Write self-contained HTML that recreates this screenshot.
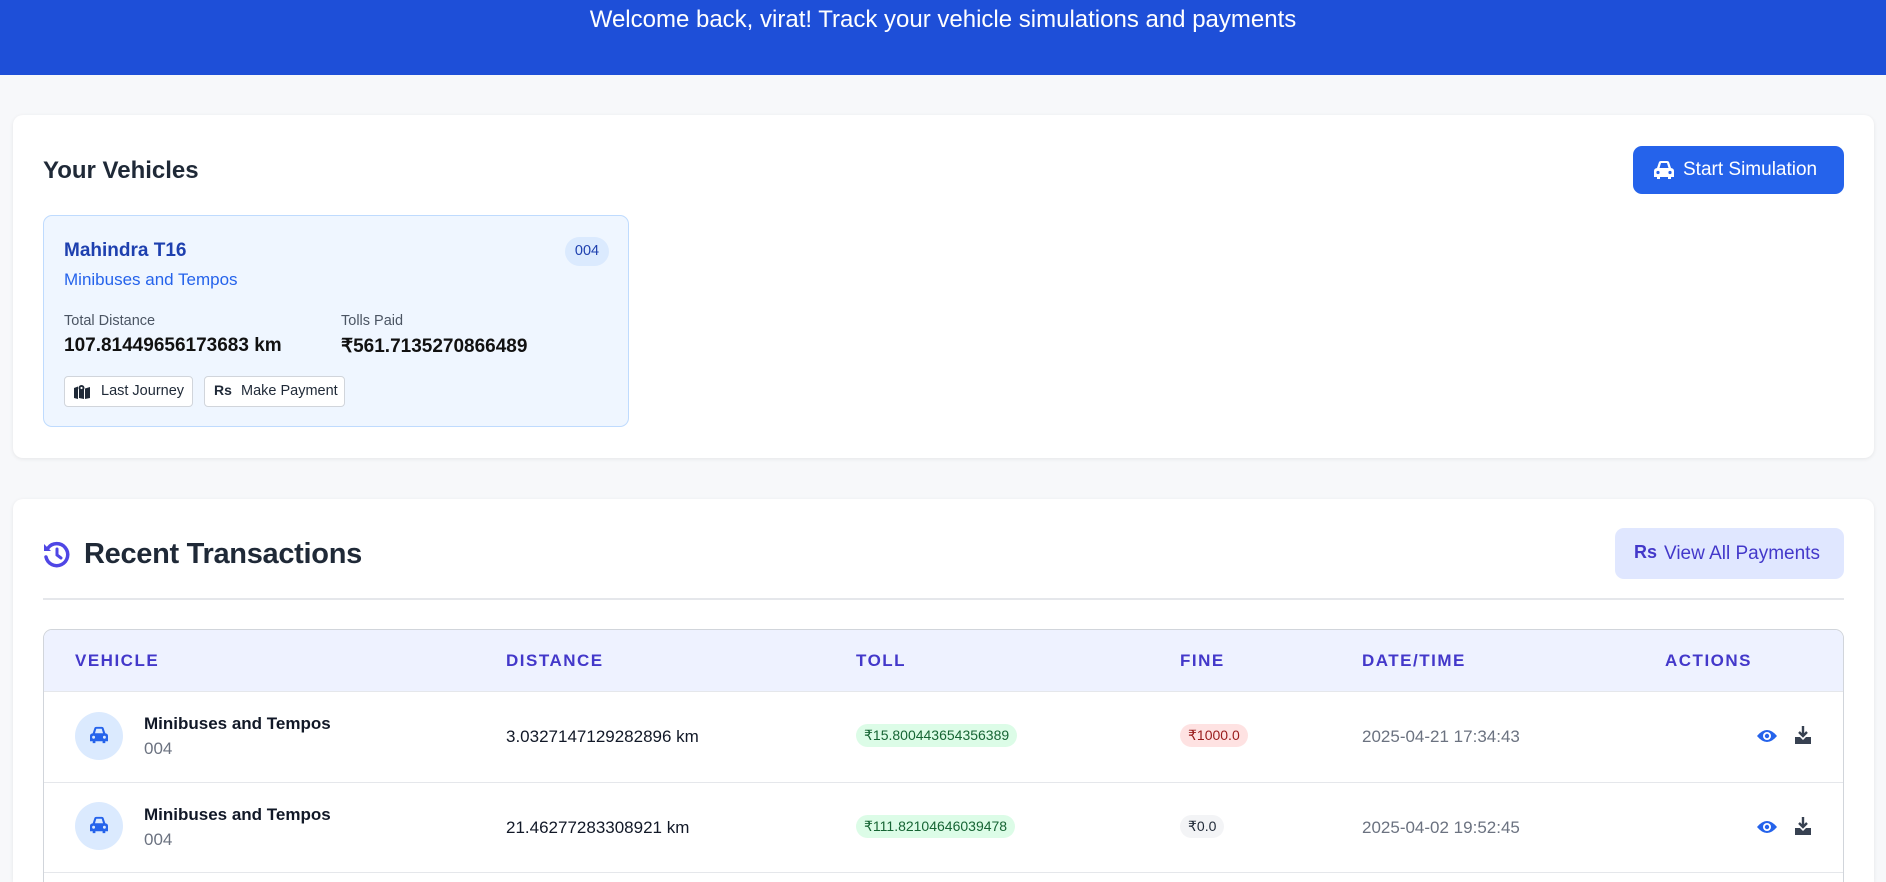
<!DOCTYPE html>
<html style="overflow:hidden;height:882px"><head><meta charset="utf-8"><style>
*{box-sizing:border-box;margin:0;padding:0}
body{width:1886px;height:882px;overflow:hidden;background:#f7f8fa;font-family:"Liberation Sans",sans-serif;color:#111827;position:relative}
.abs{position:absolute}
.hdr{left:0;top:0;width:1886px;height:75px;background:#1e4fd8;color:#fff;font-size:24px;text-align:center;line-height:40px}
.card{background:#fff;border-radius:10px;box-shadow:0 1px 4px rgba(0,0,0,.08)}
.pill{position:absolute;height:23px;line-height:23px;border-radius:12px;font-size:14px;padding:0 8px;top:724px}
.btn{position:absolute;border:1px solid #d1d5db;background:#fff;border-radius:4px;font-size:14.5px;color:#1f2937;height:31px;line-height:29px;top:376px;padding-left:10px}
.th{position:absolute;top:651px;font-size:17px;color:#4338ca;letter-spacing:1.5px;font-weight:bold}
.circ{position:absolute;left:75px;width:48px;height:48px;border-radius:50%;background:#dbeafe}
</style></head><body>
<div class="abs hdr">Welcome back, virat! Track your vehicle simulations and payments</div>

<div class="abs card" style="left:13px;top:115px;width:1861px;height:343px"></div>
<div class="abs" style="left:43px;top:157px;font-size:24px;font-weight:bold;color:#1f2937">Your Vehicles</div>
<div class="abs" style="left:1633px;top:146px;width:211px;height:48px;background:#2563eb;border-radius:9px;color:#fff;font-size:19px;line-height:48px;padding-left:50px">Start Simulation</div>
<svg class="abs" style="left:1653px;top:160px" width="22" height="20" viewBox="0 0 22 20"><path d="M4 8 L6 2 Q6.5 1 8 1 H14 Q15.5 1 16 2 L18 8 Q21 8.5 21 11 V17 H18 V19 H15 V17 H7 V19 H4 V17 H1 V11 Q1 8.5 4 8Z M6.5 8 H15.5 L14 3 H8Z" fill="#fff" fill-rule="evenodd"/><circle cx="5" cy="12.5" r="1.6" fill="#2563eb"/><circle cx="17" cy="12.5" r="1.6" fill="#2563eb"/></svg>

<div class="abs" style="left:43px;top:215px;width:586px;height:212px;background:#eff6ff;border:1px solid #bfdbfe;border-radius:9px"></div>
<div class="abs" style="left:64px;top:240px;font-size:19px;font-weight:bold;color:#1e40af">Mahindra T16</div>
<div class="abs" style="left:64px;top:270px;font-size:17px;color:#2563eb">Minibuses and Tempos</div>
<div class="abs" style="left:565px;top:237px;width:44px;height:29px;border-radius:15px;background:#dbeafe;color:#1e40af;font-size:14.5px;text-align:center;line-height:29px">004</div>
<div class="abs" style="left:64px;top:313px;font-size:14.5px;color:#4b5563">Total Distance</div>
<div class="abs" style="left:341px;top:313px;font-size:14.5px;color:#4b5563">Tolls Paid</div>
<div class="abs" style="left:64px;top:335px;font-size:19px;font-weight:bold;color:#111">107.81449656173683 km</div>
<div class="abs" style="left:341px;top:335px;font-size:19px;font-weight:bold;color:#111">₹561.7135270866489</div>
<div class="btn" style="left:64px;width:129px;padding-left:36px">Last Journey</div>
<svg class="abs" style="left:74px;top:384px" width="16" height="15" viewBox="0 0 16 15"><path d="M0 4 L4 2.5 V15 L0 14Z M5 3 L10 4.5 V15 L5 14Z M11 4.5 L16 3 V14 L11 15Z" fill="#1f2937"/><circle cx="7.5" cy="4" r="3" fill="#1f2937"/><circle cx="7.5" cy="4" r="1.1" fill="#fff"/></svg>
<div class="btn" style="left:204px;width:141px;padding-left:36px">Make Payment</div>
<div class="abs" style="left:214px;top:382px;font-size:14px;font-weight:bold;color:#1f2937">Rs</div>

<div class="abs card" style="left:13px;top:499px;width:1861px;height:383px;border-radius:10px 10px 0 0"></div>
<svg class="abs" style="left:42px;top:540px" width="30" height="30" viewBox="0 0 30 30"><path d="M6 8 A11 11 0 1 1 4 17" fill="none" stroke="#4f46e5" stroke-width="3.5" stroke-linecap="round"/><path d="M2 4 L9 11 L2 11Z" fill="#4f46e5"/><path d="M15 9 V15 L19 18" fill="none" stroke="#4f46e5" stroke-width="3" stroke-linecap="round"/></svg>
<div class="abs" style="left:84px;top:538px;font-size:29px;font-weight:bold;color:#1f2937;letter-spacing:-0.3px">Recent Transactions</div>
<div class="abs" style="left:1615px;top:528px;width:229px;height:51px;background:#e0e7ff;border-radius:9px;color:#4338ca;font-size:19px;line-height:51px;padding-left:49px">View All Payments</div>
<div class="abs" style="left:1634px;top:542px;font-size:18px;font-weight:bold;color:#4338ca">Rs</div>
<div class="abs" style="left:43px;top:598px;width:1801px;height:2px;background:#e5e7eb"></div>

<div class="abs" style="left:43px;top:629px;width:1801px;height:270px;border:1px solid #d1d5db;border-radius:9px;overflow:hidden;background:#fff">
<div style="height:61px;background:#eef2ff"></div>
<div style="height:91px;border-top:1px solid #e5e7eb"></div>
<div style="height:91px;border-top:1px solid #e5e7eb;border-bottom:1px solid #e5e7eb"></div>
</div>
<div class="th" style="left:75px">VEHICLE</div>
<div class="th" style="left:506px">DISTANCE</div>
<div class="th" style="left:856px">TOLL</div>
<div class="th" style="left:1180px">FINE</div>
<div class="th" style="left:1362px">DATE/TIME</div>
<div class="th" style="left:1665px">ACTIONS</div>

<div class="circ" style="top:712px"></div>
<div class="circ" style="top:802px"></div>
<svg class="abs" style="left:89px;top:726px" width="20" height="18" viewBox="0 0 22 20"><path d="M4 8 L6 2 Q6.5 1 8 1 H14 Q15.5 1 16 2 L18 8 Q21 8.5 21 11 V17 H18 V19 H15 V17 H7 V19 H4 V17 H1 V11 Q1 8.5 4 8Z M6.5 8 H15.5 L14 3 H8Z" fill="#2563eb" fill-rule="evenodd"/><circle cx="5" cy="12.5" r="1.6" fill="#dbeafe"/><circle cx="17" cy="12.5" r="1.6" fill="#dbeafe"/></svg>
<svg class="abs" style="left:89px;top:816px" width="20" height="18" viewBox="0 0 22 20"><path d="M4 8 L6 2 Q6.5 1 8 1 H14 Q15.5 1 16 2 L18 8 Q21 8.5 21 11 V17 H18 V19 H15 V17 H7 V19 H4 V17 H1 V11 Q1 8.5 4 8Z M6.5 8 H15.5 L14 3 H8Z" fill="#2563eb" fill-rule="evenodd"/><circle cx="5" cy="12.5" r="1.6" fill="#dbeafe"/><circle cx="17" cy="12.5" r="1.6" fill="#dbeafe"/></svg>

<div class="abs" style="left:144px;top:714px;font-size:17px;font-weight:bold">Minibuses and Tempos</div>
<div class="abs" style="left:144px;top:739px;font-size:17px;color:#6b7280">004</div>
<div class="abs" style="left:506px;top:727px;font-size:17px">3.0327147129282896 km</div>
<div class="pill" style="left:856px;background:#dcfce7;color:#166534">₹15.800443654356389</div>
<div class="pill" style="left:1180px;background:#fee2e2;color:#991b1b">₹1000.0</div>
<div class="abs" style="left:1362px;top:727px;font-size:17px;color:#6b7280">2025-04-21 17:34:43</div>

<div class="abs" style="left:144px;top:805px;font-size:17px;font-weight:bold">Minibuses and Tempos</div>
<div class="abs" style="left:144px;top:830px;font-size:17px;color:#6b7280">004</div>
<div class="abs" style="left:506px;top:818px;font-size:17px">21.46277283308921 km</div>
<div class="pill" style="left:856px;top:815px;background:#dcfce7;color:#166534">₹111.82104646039478</div>
<div class="pill" style="left:1180px;top:815px;background:#f3f4f6;color:#1f2937">₹0.0</div>
<div class="abs" style="left:1362px;top:818px;font-size:17px;color:#6b7280">2025-04-02 19:52:45</div>

<svg class="abs" style="left:1756px;top:728px" width="22" height="16" viewBox="0 0 22 16"><path d="M1 8 Q11 -4 21 8 Q11 20 1 8Z" fill="#2563eb"/><circle cx="11" cy="8" r="4" fill="#fff"/><circle cx="11" cy="8" r="2.2" fill="#2563eb"/></svg>
<svg class="abs" style="left:1794px;top:725px" width="18" height="20" viewBox="0 0 18 20"><path d="M9 1 V11 M5 7 L9 11 L13 7" stroke="#374151" stroke-width="2.4" fill="none"/><path d="M1 12 H6 L9 15 L12 12 H17 V19 H1Z" fill="#374151"/></svg>
<svg class="abs" style="left:1756px;top:819px" width="22" height="16" viewBox="0 0 22 16"><path d="M1 8 Q11 -4 21 8 Q11 20 1 8Z" fill="#2563eb"/><circle cx="11" cy="8" r="4" fill="#fff"/><circle cx="11" cy="8" r="2.2" fill="#2563eb"/></svg>
<svg class="abs" style="left:1794px;top:816px" width="18" height="20" viewBox="0 0 18 20"><path d="M9 1 V11 M5 7 L9 11 L13 7" stroke="#374151" stroke-width="2.4" fill="none"/><path d="M1 12 H6 L9 15 L12 12 H17 V19 H1Z" fill="#374151"/></svg>
</body></html>
